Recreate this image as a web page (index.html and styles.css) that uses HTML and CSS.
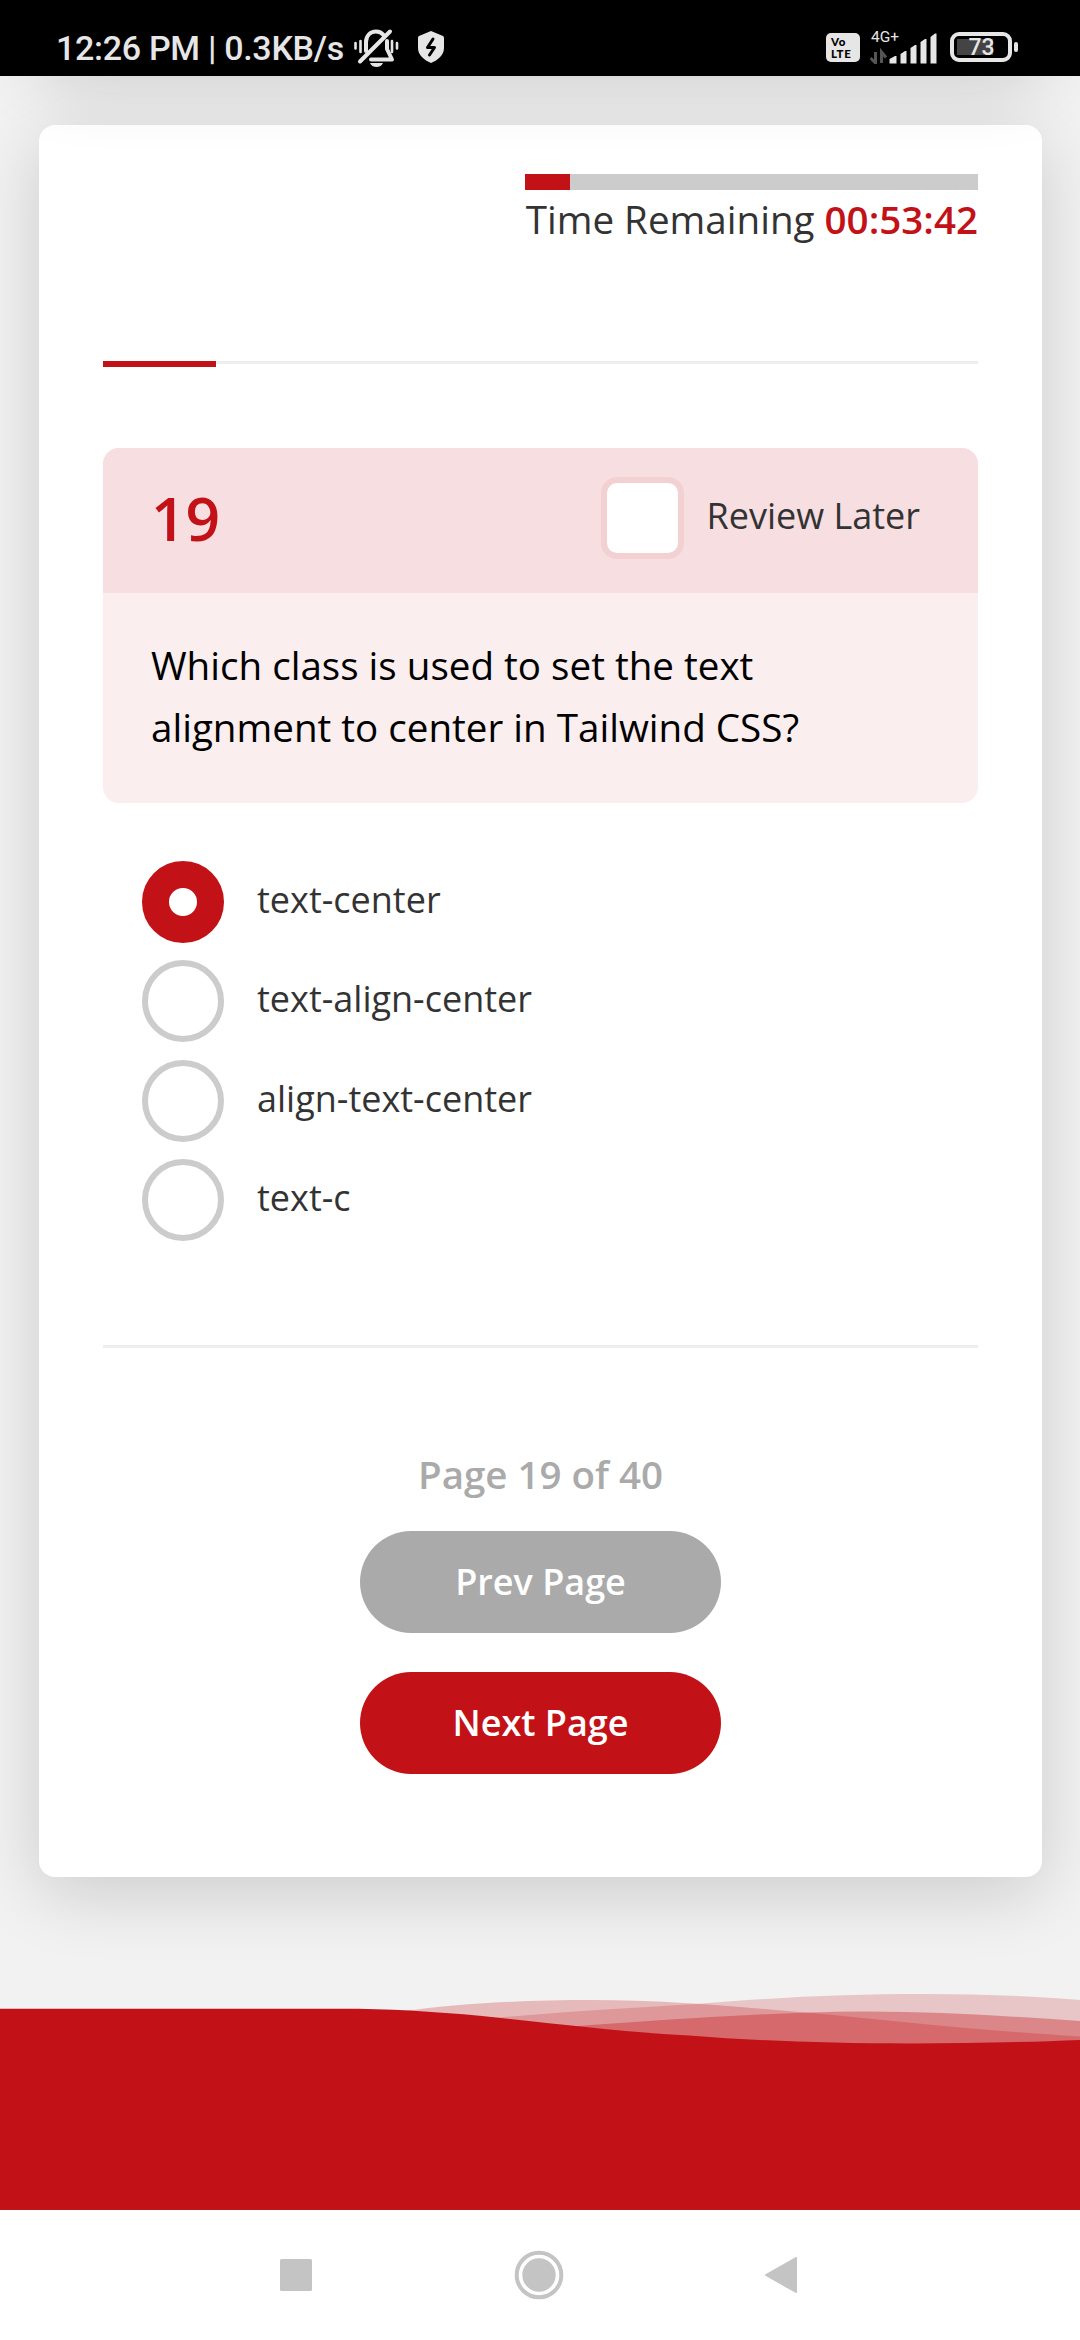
FILE: index.html
```html
<!DOCTYPE html>
<html lang="en">
<head>
<meta charset="utf-8">
<title>Quiz</title>
<link rel="stylesheet" href="styles.css">
</head>
<body>
<header class="status">
  <span class="status-time">12:26 PM | 0.3KB/s</span>
  <svg class="icon-bell" viewBox="0 0 46 40" width="46" height="40">
    <g fill="none" stroke="#e6e6e6" stroke-width="4" stroke-linecap="round" stroke-linejoin="round">
      <path d="M13 24V15C13 9 17 4.500 23 4.500C26 4.500 29 6 30.500 8"/>
      <path d="M34 14V22L39 32.500H18"/>
      <path d="M37 4.500L7 34.500"/>
    </g>
    <path d="M17 36H30C28.500 39 26 40 23.500 40S18.500 39 17 36Z" fill="#e6e6e6"/>
    <path d="M2.500 16V21.500M7.500 14V25M39 14V25M44 16V21.500" stroke="#e6e6e6" stroke-width="2.600" stroke-linecap="round"/>
  </svg>
  <svg class="icon-shield" viewBox="0 0 28 32" width="28" height="32">
    <path d="M14 0L26 5Q27 5.500 27 7V17C27 24 21 29 14 32C7 29 1 24 1 17V7Q1 5.500 2 5Z" fill="#e6e6e6"/>
    <path d="M16 8L10.500 16.500H17.500L12.500 24" fill="none" stroke="#000" stroke-width="3" stroke-linejoin="round" stroke-linecap="round"/>
  </svg>
  <div class="volte"><span>Vo</span><span>LTE</span></div>
  <div class="signal">
    <span class="net">4G+</span>
    <svg viewBox="0 0 68 32" width="68" height="32">
      <path d="M5.500 20V31L0.500 26M11.500 31V20L16 25.500" fill="none" stroke="#555" stroke-width="3"/>
      <path d="M19.500 31.500V27L25 24H26.500V31.500ZM30.500 31.500V22L35 19H36.500V31.500ZM40.500 31.500V16L45 13H46.500V31.500ZM50.500 31.500V10L55 7H56.500V31.500ZM60.500 31.500V5L65 1.500H66.500V31.500Z" fill="#e6e6e6"/>
    </svg>
  </div>
  <div class="battery"><div class="cell"><span>73</span></div><i class="nub"></i></div>
</header>

<main class="page">
  <div class="card card-above"></div>
  <section class="card quiz">
    <div class="timer">
      <div class="timer-bar"><div class="timer-fill"></div></div>
      <p class="timer-text">Time Remaining <b>00:53:42</b></p>
    </div>
    <div class="progress"><div class="progress-fill"></div></div>
    <div class="question">
      <div class="question-head">
        <span class="number">19</span>
        <label class="review"><span class="checkbox"></span><span class="review-text">Review Later</span></label>
      </div>
      <p class="question-text">Which class is used to set the text alignment to center in Tailwind CSS?</p>
    </div>
    <ul class="options">
      <li><i class="radio checked"></i><span>text-center</span></li>
      <li><i class="radio"></i><span>text-align-center</span></li>
      <li><i class="radio"></i><span>align-text-center</span></li>
      <li><i class="radio"></i><span>text-c</span></li>
    </ul>
    <hr class="rule">
    <p class="pages">Page 19 of 40</p>
    <div class="buttons">
      <button class="btn prev">Prev Page</button>
      <button class="btn next">Next Page</button>
    </div>
  </section>
  <svg class="waves" viewBox="0 0 1080 220" width="1080" height="220">
    <g fill="#c31217">
      <path opacity=".25" d="M400 22C450 14 520 10 592 10C670 10 740 17 813 23C910 33 990 41 1080 46.500V100H400Z"/>
      <path opacity=".2" d="M480 29C560 22 630 18 697 14C780 7 850 4 923 4C980 4 1030 6 1080 10V100H480Z"/>
      <path opacity=".35" d="M565 37C650 31 730 25 806 22.700C900 19 990 25 1080 31V100H565Z"/>
      <path d="M0 18.700H335C385 18.500 430 21 482 26C560 34 620 42 689 45.500C760 51 830 53.500 909 53.500C970 53.500 1030 52 1080 50V220H0Z"/>
    </g>
  </svg>
</main>

<nav class="navbar">
  <svg viewBox="0 0 34 34" width="34" height="34"><rect x="1" y="1" width="32" height="32" rx="1.500" fill="#c4c4c4"/></svg>
  <svg viewBox="0 0 50 50" width="50" height="50"><circle cx="25" cy="25" r="22.300" fill="none" stroke="#c4c4c4" stroke-width="4"/><circle cx="25" cy="25" r="16.700" fill="#c4c4c4"/></svg>
  <svg viewBox="0 0 34 38" width="34" height="38"><path d="M2 19L32 2V36Z" fill="#c4c4c4" stroke="#c4c4c4" stroke-width="2" stroke-linejoin="round"/></svg>
</nav>
</body>
</html>
```
FILE: styles.css
```css
* { box-sizing: border-box; }
body {
  margin: 0;
  width: 1080px;
  height: 2340px;
  display: flex;
  flex-direction: column;
  overflow: hidden;
  font-family: "Open Sans", sans-serif;
  color: #333;
}
p, ul { margin: 0; padding: 0; }
i { font-style: normal; }

.status {
  height: 76px;
  flex: none;
  background: #000;
  color: #e6e6e6;
  font-family: Roboto, sans-serif;
  display: flex;
  align-items: flex-start;
  padding: 27px 62px 0 56px;
}
.status-time {
  width: 297px;
  font-size: 34px;
  letter-spacing: -0.3px;
  line-height: 42px;
  font-weight: 500;
  white-space: nowrap;
}
.icon-shield { margin: 4px auto 0 18px; }
.volte {
  width: 34px;
  height: 29px;
  margin: 6px 10px 0 0;
  padding: 3px 0 0 5px;
  border-radius: 5px;
  background: #e6e6e6;
  color: #000;
  font: 900 11.500px/12px Lato, sans-serif;
  letter-spacing: 0.600px;
  display: flex;
  flex-direction: column;
}
.signal { width: 68px; height: 36px; display: grid; margin-right: 12px; }
.signal > * { grid-area: 1 / 1; }
.signal svg { margin-top: 5px; }
.net { font-size: 15.500px; line-height: 18px; padding: 1px 0 0 1px; }
.battery { display: flex; align-items: center; gap: 2px; margin-top: 5px; }
.cell {
  width: 62px;
  height: 30px;
  border: 4px solid #e6e6e6;
  border-radius: 9px;
  padding-left: 1px;
  background: linear-gradient(#444, #444) 3px 3px / 36px 16px no-repeat;
  font-size: 23px;
  font-weight: 500;
  line-height: 23px;
  text-align: center;
}
.nub { width: 4px; height: 10px; border-radius: 2px; background: #e6e6e6; }

.page {
  height: 2134px;
  flex: none;
  background: #f2f2f2;
  overflow: hidden;
  display: flex;
  flex-direction: column;
}
.card {
  margin: 0 38px 0 39px;
  border-radius: 16px;
  background: #fff;
  box-shadow: 0 16px 70px rgba(0, 0, 0, .16);
  flex: none;
}
.card-above { position: relative; z-index: 1; height: 400px; margin-top: -410px; }
.quiz { margin-top: 59px; height: 1752px; padding: 49px 64px 0; display: flex; flex-direction: column; }

.timer { width: 453px; align-self: flex-end; }
.timer-bar { height: 16px; background: #ccc; }
.timer-fill { width: 45px; height: 16px; background: #c31217; }
.timer-text { font-size: 38.600px; line-height: 58px; white-space: nowrap; text-align: right; }
.timer-text b { font-weight: 600; color: #c31217; }

.progress { height: 3px; margin-top: 113px; background: #eee; }
.progress-fill { width: 113px; height: 6px; background: #c31217; }

.question { margin-top: 84px; height: 355px; border-radius: 16px; overflow: hidden; background: #faeeee; }
.question-head {
  height: 145px;
  background: #f6dee1;
  padding: 0 58px 0 48px;
  display: flex;
  justify-content: space-between;
}
.number { font-size: 60.500px; line-height: 82px; font-weight: 600; color: #c31217; margin-top: 29px; }
.review { display: flex; gap: 22px; padding-top: 29px; }
.checkbox { width: 83px; height: 82px; border: 6px solid #f3d1d3; border-radius: 16px; background: #fff; }
.review-text { font-size: 36px; line-height: 49px; margin-top: 14px; }
.question-text { padding: 41px 48px 0; font-size: 38.600px; line-height: 62px; color: #000; }

.options { list-style: none; margin-top: 58px; padding-left: 39px; display: flex; flex-direction: column; gap: 17.400px; }
.options li { display: flex; gap: 33px; font-size: 36px; line-height: 49px; }
.options span { margin-top: 14px; }
.radio { width: 82px; height: 82px; border: 6px solid #ccc; border-radius: 50%; }
.radio.checked { border: 27px solid #c31217; }

.rule { width: 100%; height: 3px; border: 0; margin: 104px 0 0; background: #eee; }
.pages { margin-top: 99px; text-align: center; font-size: 38.500px; line-height: 54px; font-weight: 600; color: #aaa; }
.buttons { display: flex; flex-direction: column; align-items: center; gap: 39px; margin-top: 30px; }
.btn {
  width: 361px;
  height: 102px;
  border: 0;
  border-radius: 51px;
  padding: 0 0 2px;
  font: 600 36px "Open Sans", sans-serif;
  color: #fff;
}
.prev { background: #aaa; }
.next { background: #c31217; }
.waves { margin-top: auto; flex: none; display: block; }

.navbar {
  flex: 1;
  background: #fff;
  display: grid;
  grid-template-columns: 34px 1fr 34px;
  justify-items: center;
  align-items: center;
  padding: 0 282px 0 279px;
}
```
